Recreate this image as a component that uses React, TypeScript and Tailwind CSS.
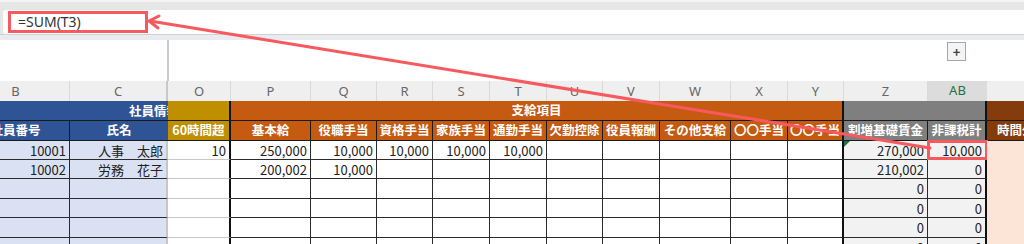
const GRID =
  "grid grid-cols-[108px_98px_63px_80px_66px_56px_57px_57px_56px_57px_71px_57px_56px_84px_59px_60px]";

const letters = ["B", "C", "O", "P", "Q", "R", "S", "T", "U", "V", "W", "X", "Y", "Z", "AB", ""];

const subHeaders = [
  "社員番号",
  "氏名",
  "60時間超",
  "基本給",
  "役職手当",
  "資格手当",
  "家族手当",
  "通勤手当",
  "欠勤控除",
  "役員報酬",
  "その他支給",
  "〇〇手当",
  "〇〇手当",
  "割増基礎賃金",
  "非課税計",
  "時間外手当",
];

// header row 2 fill + borders, one per column
const subHeaderCls = [
  "bg-[#2f5496] border-r border-[#1a1a1a]",
  "bg-[#2f5496]",
  "bg-[#bf8f00] border-r-2 border-[#111]",
  "bg-[#c55a11] border-r border-[#1a1a1a]",
  "bg-[#c55a11] border-r border-[#1a1a1a]",
  "bg-[#c55a11] border-r border-[#1a1a1a]",
  "bg-[#c55a11] border-r border-[#1a1a1a]",
  "bg-[#c55a11] border-r border-[#1a1a1a]",
  "bg-[#c55a11] border-r border-[#1a1a1a]",
  "bg-[#c55a11] border-r border-[#1a1a1a]",
  "bg-[#c55a11] border-r border-[#1a1a1a]",
  "bg-[#c55a11] border-r border-[#1a1a1a]",
  "bg-[#c55a11] border-r-2 border-[#111]",
  "bg-[#7f7f7f] border-r border-[#1a1a1a]",
  "bg-[#7f7f7f] border-r-2 border-[#111]",
  "bg-[#843c0c] justify-start pl-[10px]",
];

// data cells fill + borders, one per column
const dataCls = [
  "bg-[#d9e1f2] border-r border-b border-[#2b2b2b]",
  "bg-[#d9e1f2] border-b border-[#2b2b2b] border-r-2 border-r-[#c6c6c6]",
  "bg-white border-b border-[#c8c8c8] border-r-2 border-r-[#111]",
  "bg-white border-r border-b border-[#2b2b2b]",
  "bg-white border-r border-b border-[#2b2b2b]",
  "bg-white border-r border-b border-[#2b2b2b]",
  "bg-white border-r border-b border-[#2b2b2b]",
  "bg-white border-r border-b border-[#2b2b2b]",
  "bg-white border-r border-b border-[#2b2b2b]",
  "bg-white border-r border-b border-[#2b2b2b]",
  "bg-white border-r border-b border-[#2b2b2b]",
  "bg-white border-r border-b border-[#2b2b2b]",
  "bg-white border-b border-[#2b2b2b] border-r-2 border-r-[#111]",
  "bg-[#f2f2f2] border-r border-b border-[#2b2b2b]",
  "bg-[#f2f2f2] border-b border-[#2b2b2b] border-r-2 border-r-[#111]",
  "bg-[#fce4d6]",
];

const rows: { h: string; v: string[] }[] = [
  { h: "h-[19px]", v: ["10001", "人事　太郎", "10", "250,000", "10,000", "10,000", "10,000", "10,000", "", "", "", "", "", "270,000", "10,000", ""] },
  { h: "h-[19px]", v: ["10002", "労務　花子", "", "200,002", "10,000", "", "", "", "", "", "", "", "", "210,002", "0", ""] },
  { h: "h-[20px]", v: ["", "", "", "", "", "", "", "", "", "", "", "", "", "0", "0", ""] },
  { h: "h-[19px]", v: ["", "", "", "", "", "", "", "", "", "", "", "", "", "0", "0", ""] },
  { h: "h-[20px]", v: ["", "", "", "", "", "", "", "", "", "", "", "", "", "0", "0", ""] },
  { h: "h-[19px]", v: ["", "", "", "", "", "", "", "", "", "", "", "", "", "0", "0", ""] },
];

const Arrow = () => (
  <svg className="pointer-events-none absolute inset-0" width="1024" height="244" viewBox="0 0 1024 244">
    <line x1="930" y1="148" x2="150" y2="21" stroke="#f65a5e" strokeWidth="3" strokeLinecap="round" />
    <polyline
      points="159,16 149,21 158,28"
      fill="none"
      stroke="#f65a5e"
      strokeWidth="3"
      strokeLinecap="round"
      strokeLinejoin="round"
    />
  </svg>
);

export default function App() {
  return (
    <div className="relative h-[244px] w-[1024px] overflow-hidden bg-white font-['Noto_Sans_CJK_JP',sans-serif]">
      {/* ribbon edge */}
      <div className="h-[10px] border-t-2 border-[#f4f4f4] bg-[#e6e6e6]" />

      {/* formula bar */}
      <div className="flex h-[24px] bg-[#e6e6e6]">
        <div className="ml-[3px] flex-1 rounded-l-[3px] bg-white pt-[1px] pl-[5px]">
          <div className="flex h-[22px] w-[140px] items-center border-[3px] border-[#f65a5e] pl-[7px] font-['Noto_Sans',sans-serif] text-[14px] leading-none text-[#333]">
            =SUM(T3)
          </div>
        </div>
      </div>
      <div className="h-[6px] border-t border-[#d2d2d2] bg-[#e9ebee]" />

      {/* outline area */}
      <div className="flex h-[41px] bg-white">
        <div className="w-[169px] shrink-0 border-r-2 border-[#c8c8c8]" />
        <div className="flex flex-1 justify-end pt-[2px] pr-[58px]">
          <div className="flex h-[19px] w-[19px] items-center justify-center border border-[#a6a6a6] bg-[#f4f4f4] text-[13px] font-bold leading-none text-[#444]">
            +
          </div>
        </div>
      </div>

      <div className="-ml-[38px]">
        {/* column letters */}
        <div className={`${GRID} h-[20px] bg-[#efefef] font-['Noto_Sans',sans-serif] text-[13px] text-[#666]`}>
          {letters.map((l, i) => (
            <div
              key={i}
              className={
                l === "AB"
                  ? "flex items-center justify-center border-b-2 border-[#217346] bg-[#dcdcdc] text-[#217346]"
                  : i === 1
                    ? "flex items-center justify-center border-r-2 border-[#c8c8c8]"
                    : "flex items-center justify-center border-r border-[#d9d9d9]"
              }
            >
              {l}
            </div>
          ))}
        </div>

        {/* header row 1 */}
        <div className={`${GRID} h-[20px] border-b border-[#1a1a1a] text-[12.5px] font-bold text-white`}>
          <div className="col-span-2 overflow-hidden whitespace-nowrap bg-[#2f5496] pl-[167px] leading-[19px]">社員情報</div>
          <div className="border-r-2 border-[#111] bg-[#bf8f00]" />
          <div className="col-span-10 flex items-center justify-center border-r-2 border-[#111] bg-[#c55a11]">
            支給項目
          </div>
          <div className="col-span-2 border-r-2 border-[#111] bg-[#7f7f7f]" />
          <div className="bg-[#843c0c]" />
        </div>

        {/* header row 2 */}
        <div className={`${GRID} h-[20px] border-b border-[#1a1a1a] text-[12.5px] font-bold text-white`}>
          {subHeaders.map((t, i) => (
            <div key={i} className={`flex items-center justify-center overflow-hidden whitespace-nowrap ${subHeaderCls[i]}`}>
              {t}
            </div>
          ))}
        </div>

        {/* data */}
        {rows.map((r, ri) => (
          <div key={ri} className={`${GRID} ${r.h} text-[13px] text-[#222]`}>
            {r.v.map((v, ci) => (
              <div
                key={ci}
                className={`relative flex items-center justify-end overflow-visible whitespace-nowrap pr-[3px] leading-none ${dataCls[ci]}`}
              >
                {ri === 0 && ci === 13 && (
                  <span className="absolute top-0 left-0 h-0 w-0 border-t-[6px] border-r-[6px] border-t-[#1e7145] border-r-transparent" />
                )}
                {ri === 0 && ci === 14 && (
                  <span className="absolute -top-[1px] -left-[1px] h-[20px] w-[61px] border-[3px] border-[#f65a5e]" />
                )}
                {v}
              </div>
            ))}
          </div>
        ))}
      </div>

      <Arrow />
    </div>
  );
}
